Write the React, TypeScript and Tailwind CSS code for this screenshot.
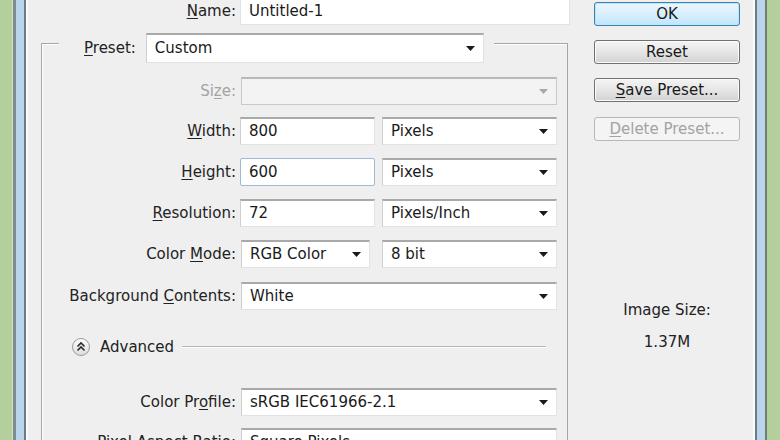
import React from "react";

const Arrow = ({ disabled }: { disabled?: boolean }) => (
  <svg width="9" height="5" viewBox="0 0 9 5" className="shrink-0">
    <path d="M0 0h9L4.5 5z" fill={disabled ? "#a8a8a8" : "#1a1a1a"} />
  </svg>
);

const Select = ({
  value,
  w,
  h = "h-[28px]",
  disabled,
}: {
  value: string;
  w: string;
  h?: string;
  disabled?: boolean;
}) => (
  <div
    className={`${w} ${h} flex items-center justify-between pl-[8px] pr-[8px] border border-t-2 ${
      disabled
        ? "bg-[#f3f3f3] border-[#c9c9c9] border-t-[#b9b9b9]"
        : "bg-white border-[#e2e2e2] border-t-[#a9a9a9] border-l-[#cfcfcf]"
    }`}
  >
    <span className="text-[#1a1a1a] leading-none">{value}</span>
    <Arrow disabled={disabled} />
  </div>
);

const Input = ({ value, focus }: { value: string; focus?: boolean }) => (
  <div
    className={`w-[135px] h-[28px] flex items-center pl-[8px] bg-white border ${
      focus
        ? "border-[#9bbad8] rounded-[2px]"
        : "border-[#e2e2e2] border-t-2 border-t-[#a9a9a9] border-l-[#cfcfcf]"
    }`}
  >
    <span className="text-[#1a1a1a] leading-none">{value}</span>
  </div>
);

const Label = ({ children, gray }: { children: React.ReactNode; gray?: boolean }) => (
  <div
    className={`w-[194px] shrink-0 text-right leading-none ${
      gray ? "text-[#a3a3a3]" : "text-[#222222]"
    }`}
  >
    {children}
  </div>
);

const U = ({ children }: { children: React.ReactNode }) => (
  <span className="underline underline-offset-[2px] decoration-1">{children}</span>
);

const Btn = ({
  children,
  mt,
  kind,
}: {
  children: React.ReactNode;
  mt: string;
  kind?: "ok" | "disabled";
}) => {
  const cls =
    kind === "ok"
      ? "border-[#3c7fb1] bg-gradient-to-b from-[#eaf6fd] via-[#d9f0fc] to-[#bee6fd] text-[#1a1a1a] shadow-[inset_0_0_0_1px_#bfe3f7]"
      : kind === "disabled"
      ? "border-[#b5b9bc] bg-[#f4f4f4] text-[#a3a3a3]"
      : "border-[#707070] bg-gradient-to-b from-[#f4f4f4] via-[#e6e6e6] to-[#d2d2d2] text-[#1a1a1a] shadow-[inset_0_0_0_1px_#fbfbfb]";
  return (
    <div
      className={`${mt} w-[146px] h-[24px] rounded-[3px] border flex items-center justify-center leading-none ${cls}`}
    >
      {children}
    </div>
  );
};

export default function App() {
  return (
    <div className="w-[780px] h-[440px] overflow-hidden flex bg-[#efefef] font-['DejaVu_Sans',sans-serif] text-[15px]">
      {/* left window frame */}
      <div className="flex shrink-0">
        <div className="w-[12px] bg-[#b3cf9b]" />
        <div className="w-[1px] bg-[#cfe2bf]" />
        <div className="w-[3px] bg-[#7e8c92]" />
        <div className="w-[8px] bg-[#bad4eb]" />
        <div className="w-[2px] bg-[#6d7b87]" />
        <div className="w-[2px] bg-[#fbfbfb]" />
      </div>

      {/* dialog content */}
      <div className="flex-1 flex">
        {/* main column */}
        <div className="w-[542px] shrink-0 flex flex-col">
          {/* Name row */}
          <div className="-mt-[3px] h-[28px] flex items-center">
            <div className="w-[208px] text-right text-[#222222] leading-none">
              <U>N</U>ame:
            </div>
            <div className="ml-[4px] w-[330px] h-[28px] flex items-center pl-[8px] bg-white border border-[#e2e2e2] border-t-2 border-t-[#a9a9a9]">
              <span className="text-[#1a1a1a] leading-none">Untitled-1</span>
            </div>
          </div>

          {/* fieldset */}
          <div className="mt-[18px] ml-[13px] w-[527px] flex-1 border-l border-t border-r border-[#a6a6a6] shadow-[inset_1px_1px_0_#ffffff] flex flex-col">
            {/* Preset legend row */}
            <div className="-mt-[11px] ml-[17px] w-[435px] h-[30px] bg-[#efefef] flex items-center pl-[25px]">
              <div className="text-[#222222] leading-none">
                <U>P</U>reset:
              </div>
              <div className="ml-[10px]">
                <Select value="Custom" w="w-[338px]" h="h-[30px]" />
              </div>
            </div>

            {/* Size */}
            <div className="mt-[14px] h-[28px] flex items-center">
              <Label gray>
                Si<U>z</U>e:
              </Label>
              <div className="ml-[5px]">
                <Select value="" w="w-[316px]" disabled />
              </div>
            </div>

            {/* Width */}
            <div className="mt-[12px] h-[28px] flex items-center">
              <Label>
                <U>W</U>idth:
              </Label>
              <div className="ml-[4px] flex gap-[7px]">
                <Input value="800" />
                <Select value="Pixels" w="w-[175px]" />
              </div>
            </div>

            {/* Height */}
            <div className="mt-[13px] h-[28px] flex items-center">
              <Label>
                <U>H</U>eight:
              </Label>
              <div className="ml-[4px] flex gap-[7px]">
                <Input value="600" focus />
                <Select value="Pixels" w="w-[175px]" />
              </div>
            </div>

            {/* Resolution */}
            <div className="mt-[13px] h-[28px] flex items-center">
              <Label>
                <U>R</U>esolution:
              </Label>
              <div className="ml-[4px] flex gap-[7px]">
                <Input value="72" />
                <Select value="Pixels/Inch" w="w-[175px]" />
              </div>
            </div>

            {/* Color Mode */}
            <div className="mt-[13px] h-[28px] flex items-center">
              <Label>
                Color <U>M</U>ode:
              </Label>
              <div className="ml-[5px] flex gap-[12px]">
                <Select value="RGB Color" w="w-[129px]" />
                <Select value="8 bit" w="w-[175px]" />
              </div>
            </div>

            {/* Background Contents */}
            <div className="mt-[14px] h-[28px] flex items-center">
              <Label>
                Background <U>C</U>ontents:
              </Label>
              <div className="ml-[5px]">
                <Select value="White" w="w-[316px]" />
              </div>
            </div>

            {/* Advanced */}
            <div className="mt-[27px] h-[20px] flex items-center pl-[29px]">
              <svg width="20" height="20" viewBox="0 0 20 20" className="shrink-0">
                <defs>
                  <linearGradient id="adv" x1="0" y1="0" x2="0" y2="1">
                    <stop offset="0" stopColor="#ffffff" />
                    <stop offset="1" stopColor="#dcdcdc" />
                  </linearGradient>
                </defs>
                <circle cx="10" cy="10" r="8.5" fill="url(#adv)" stroke="#9a9a9a" />
                <path
                  d="M6.5 9.5 10 6l3.5 3.5M6.5 13.5 10 10l3.5 3.5"
                  fill="none"
                  stroke="#2a2a2a"
                  strokeWidth="1.6"
                />
              </svg>
              <span className="ml-[9px] text-[#222222] leading-none">Advanced</span>
              <div className="ml-[8px] w-[364px] h-[2px] border-t border-[#b4b4b4] bg-white" />
            </div>

            {/* Color Profile */}
            <div className="mt-[31px] h-[28px] flex items-center">
              <Label>
                Color Pr<U>o</U>file:
              </Label>
              <div className="ml-[5px]">
                <Select value="sRGB IEC61966-2.1" w="w-[316px]" />
              </div>
            </div>

            {/* Pixel Aspect Ratio */}
            <div className="mt-[12px] h-[28px] flex items-center">
              <Label>
                Pixel <U>A</U>spect Ratio:
              </Label>
              <div className="ml-[5px]">
                <Select value="Square Pixels" w="w-[316px]" />
              </div>
            </div>
          </div>
        </div>

        {/* right column */}
        <div className="ml-[24px] w-[146px] flex flex-col items-center text-[15px]">
          <Btn mt="mt-[2px]" kind="ok">
            OK
          </Btn>
          <Btn mt="mt-[14px]">Reset</Btn>
          <Btn mt="mt-[14px]">
            <U>S</U>ave Preset...
          </Btn>
          <Btn mt="mt-[15px]" kind="disabled">
            <U>D</U>elete Preset...
          </Btn>
          <div className="mt-[162px] text-[#222222] leading-none">Image Size:</div>
          <div className="mt-[17px] text-[#222222] leading-none">1.37M</div>
        </div>
      </div>

      {/* right window frame */}
      <div className="flex shrink-0">
        <div className="w-[2px] bg-[#fbfbfb]" />
        <div className="w-[2px] bg-[#6d7b87]" />
        <div className="w-[8px] bg-[#bad4eb]" />
        <div className="w-[2px] bg-[#6f7d72]" />
        <div className="w-[13px] bg-[#b3cf9b]" />
      </div>
    </div>
  );
}
